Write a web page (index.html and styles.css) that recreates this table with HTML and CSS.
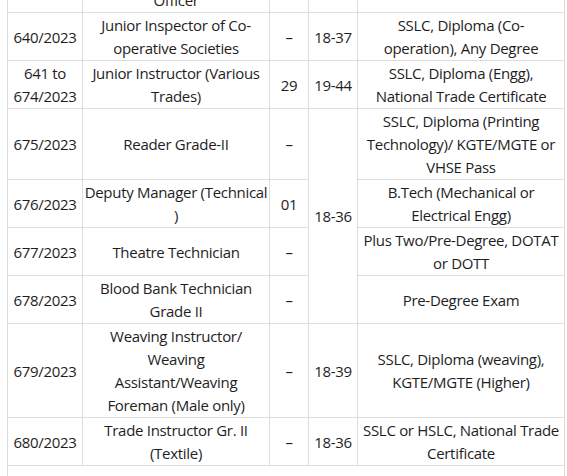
FILE: index.html
```html
<!DOCTYPE html>
<html lang="en">
<head>
<meta charset="utf-8">
<title>Kerala PSC Notifications</title>
<link rel="stylesheet" href="styles.css">
</head>
<body>
<table class="posts">
  <colgroup>
    <col class="c-cat">
    <col class="c-post">
    <col class="c-vac">
    <col class="c-age">
    <col class="c-qual">
  </colgroup>
  <tbody>
    <tr>
      <td>639/2023</td>
      <td>Assistant Engineer<br>(Civil)/ Technical<br>Officer</td>
      <td>–</td>
      <td>18-36</td>
      <td>Degree</td>
    </tr>
    <tr>
      <td>640/2023</td>
      <td>Junior Inspector of Co-<br>operative Societies</td>
      <td>–</td>
      <td>18-37</td>
      <td>SSLC, Diploma (Co-<br>operation), Any Degree</td>
    </tr>
    <tr>
      <td>641 to<br>674/2023</td>
      <td>Junior Instructor (Various<br>Trades)</td>
      <td>29</td>
      <td>19-44</td>
      <td>SSLC, Diploma (Engg),<br>National Trade Certificate</td>
    </tr>
    <tr>
      <td>675/2023</td>
      <td>Reader Grade-II</td>
      <td>–</td>
      <td rowspan="4">18-36</td>
      <td>SSLC, Diploma (Printing<br>Technology)/ KGTE/MGTE or<br>VHSE Pass</td>
    </tr>
    <tr>
      <td>676/2023</td>
      <td>Deputy Manager (Technical<br>)</td>
      <td>01</td>
      <td>B.Tech (Mechanical or<br>Electrical Engg)</td>
    </tr>
    <tr>
      <td>677/2023</td>
      <td>Theatre Technician</td>
      <td>–</td>
      <td>Plus Two/Pre-Degree, DOTAT<br>or DOTT</td>
    </tr>
    <tr>
      <td>678/2023</td>
      <td>Blood Bank Technician<br>Grade II</td>
      <td>–</td>
      <td>Pre-Degree Exam</td>
    </tr>
    <tr>
      <td>679/2023</td>
      <td>Weaving Instructor/<br>Weaving<br>Assistant/Weaving<br>Foreman (Male only)</td>
      <td>–</td>
      <td>18-39</td>
      <td>SSLC, Diploma (weaving),<br>KGTE/MGTE (Higher)</td>
    </tr>
    <tr>
      <td>680/2023</td>
      <td>Trade Instructor Gr. II<br>(Textile)</td>
      <td>–</td>
      <td>18-36</td>
      <td>SSLC or HSLC, National Trade<br>Certificate</td>
    </tr>
    <tr>
      <td class="note" colspan="5"></td>
    </tr>
  </tbody>
</table>
</body>
</html>
```

FILE: styles.css
```css
html, body {
  margin: 0;
  padding: 0;
  background: #ffffff;
}

body {
  font-family: "Open Sans", "Noto Sans", "Liberation Sans", sans-serif;
  font-size: 15px;
  line-height: 23px;
  letter-spacing: -0.3px;
  color: #1e1e1e;
  overflow: hidden;
}

.posts {
  border-collapse: collapse;
  table-layout: fixed;
  width: 557px;
  margin: -59px 0 0 7px;
}

.c-cat { width: 75px; }
.c-post { width: 187px; }
.c-vac { width: 39px; }
.c-age { width: 49px; }
.c-qual { width: 207px; }

.posts td {
  border: 1px solid #dddddd;
  padding: 1px 1px 0;
  text-align: center;
  vertical-align: middle;
  white-space: nowrap;
}

.posts td.note {
  height: 10px;
}
```
